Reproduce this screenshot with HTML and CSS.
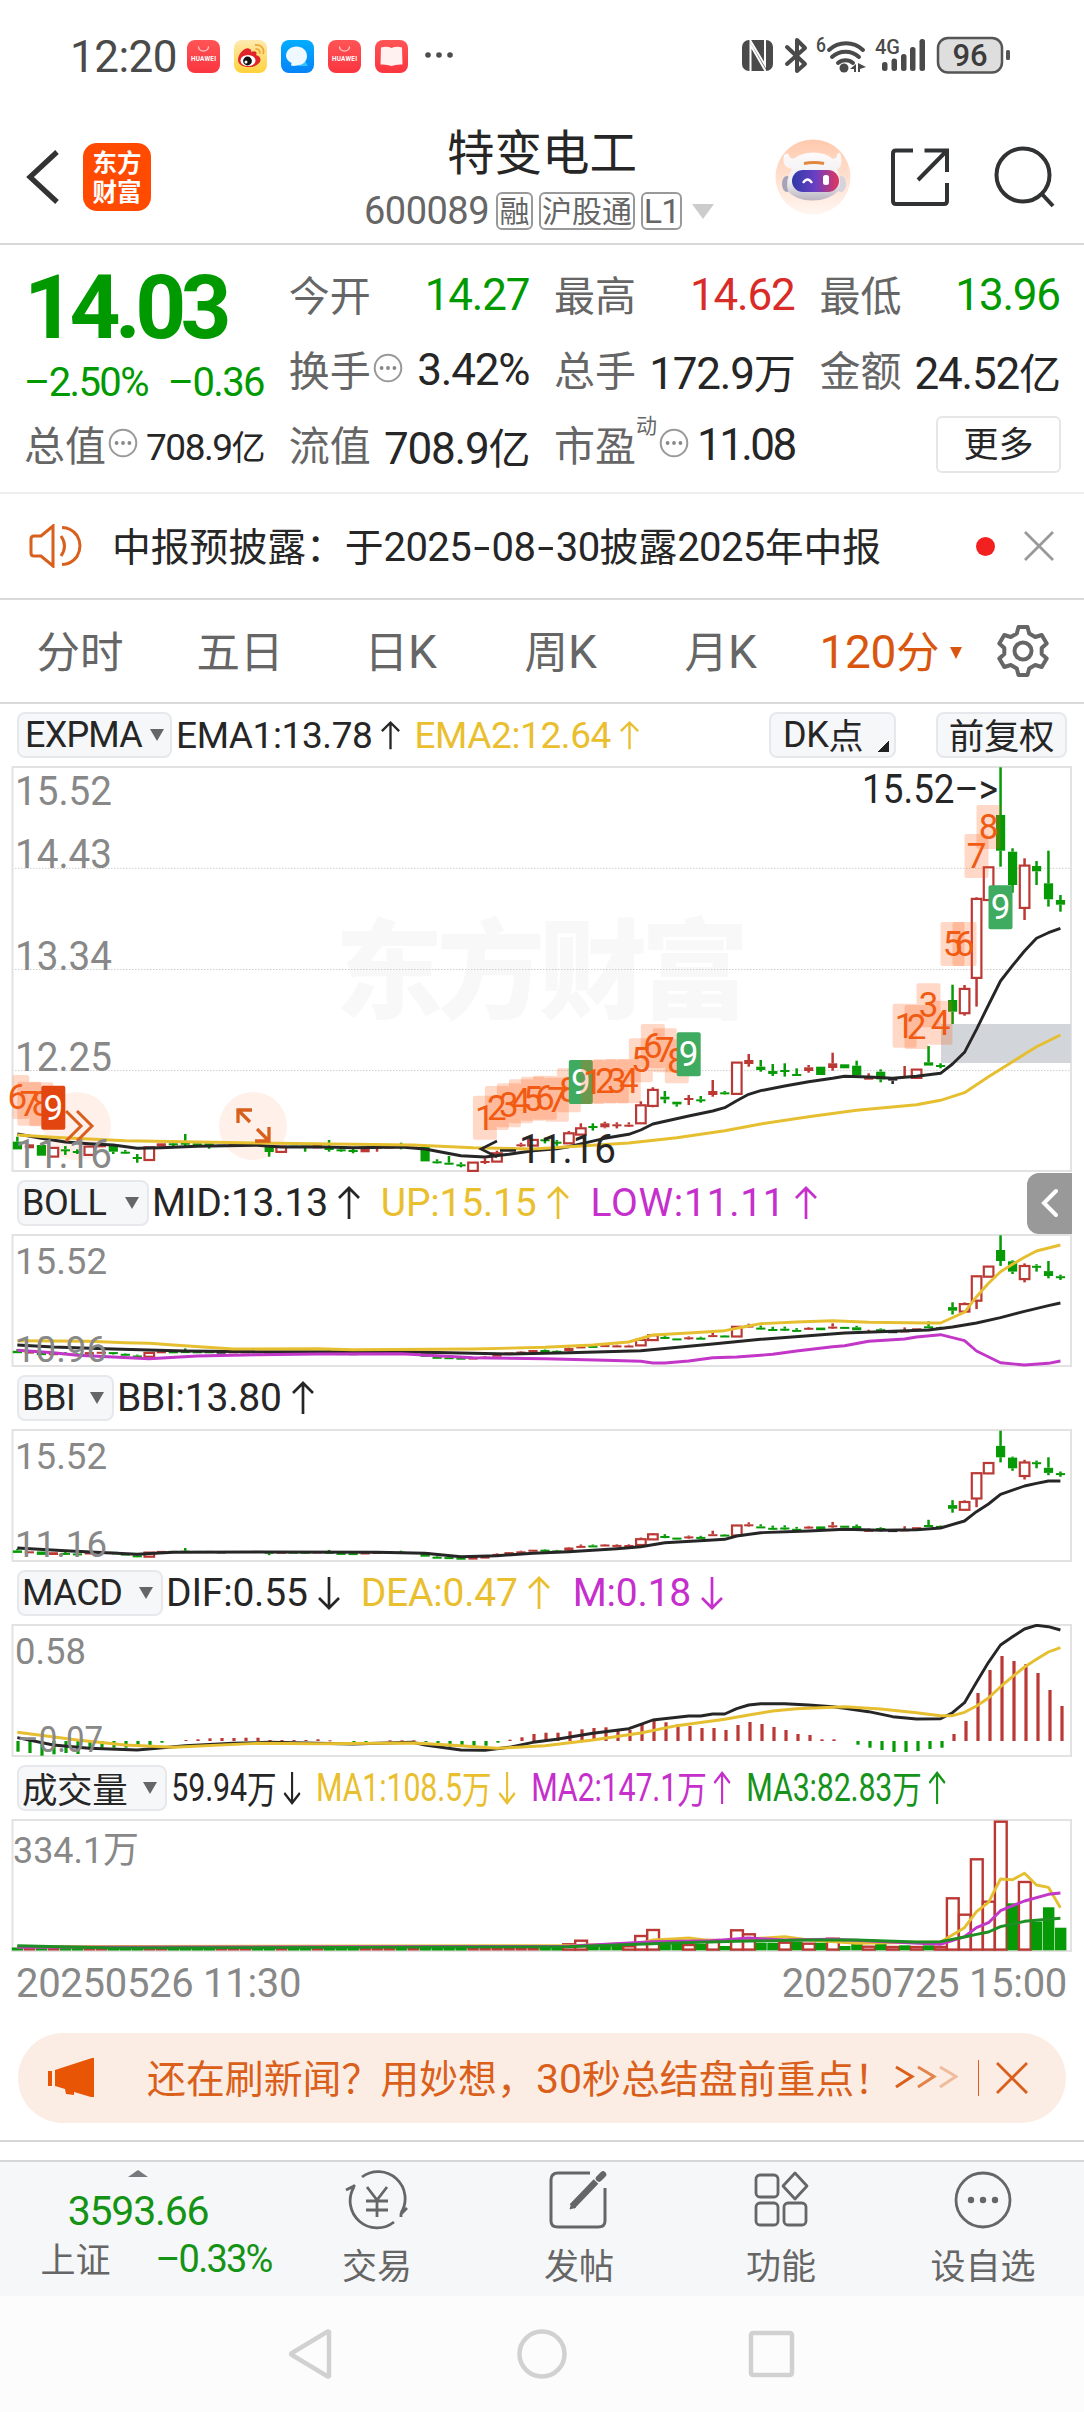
FILE: index.html
```html
<!DOCTYPE html>
<html lang="zh-CN">
<head>
<meta charset="utf-8">
<title>特变电工 600089</title>
<link rel="stylesheet" href="styles.css">
</head>
<body>
<svg class="defs" width="0" height="0" aria-hidden="true">
  <symbol id="up" viewBox="0 0 22 34"><path d="M11 33V2M1 12 11 2l10 10" fill="none" stroke="currentColor" stroke-width="2.7"/></symbol>
  <symbol id="down" viewBox="0 0 22 34"><path d="M11 1v31M1 22l10 10 10-10" fill="none" stroke="currentColor" stroke-width="2.7"/></symbol>
  <symbol id="info" viewBox="0 0 30 30"><circle cx="15" cy="15" r="13.3" fill="none" stroke="#999" stroke-width="2"/><g fill="#888"><circle cx="8.6" cy="15" r="1.9"/><circle cx="15" cy="15" r="1.9"/><circle cx="21.4" cy="15" r="1.9"/></g></symbol>
  <linearGradient id="red" x2="0" y2="1"><stop offset="0" stop-color="#ff5456"/><stop offset="1" stop-color="#fa3540"/></linearGradient>
</svg>

<div class="status">
  <span class="clock">12:20</span>
  <div class="apps">
    <svg width="33" height="33" viewBox="0 0 33 33"><rect width="33" height="33" rx="8" fill="url(#red)"/><path d="M11.500 6.500c0 6 10 6 10 0" fill="none" stroke="#ffd9d9" stroke-width="1.200"/><text x="4" y="21" font-size="6.400" font-weight="700" fill="#fff" textLength="25">HUAWEI</text></svg>
    <svg width="33" height="33" viewBox="0 0 33 33"><defs><linearGradient id="sun" x2="0" y2="1"><stop offset="0" stop-color="#fdeab0"/><stop offset="1" stop-color="#ffd23a"/></linearGradient></defs><rect width="33" height="33" rx="8" fill="url(#sun)"/><path d="M4 20C4 13 12 6 16 9c2 1 1 3 1 3 4-2 7 0 5 3 5 1 6 6 2 9-5 5-20 4-20-4z" fill="#e0242b"/><ellipse cx="14" cy="20.500" rx="7.500" ry="5.500" fill="#fff"/><circle cx="13.500" cy="21" r="4.400" fill="#111"/><circle cx="12" cy="22" r="1.500" fill="#fff"/><path d="M21 5c6-1 10 4 8 9M21.500 9c3-.5 5 2 4 4.500" fill="none" stroke="#f0a638" stroke-width="1.800"/></svg>
    <svg width="33" height="33" viewBox="0 0 33 33"><defs><linearGradient id="sky" x2="0" y2="1"><stop offset="0" stop-color="#00adff"/><stop offset="1" stop-color="#0783f8"/></linearGradient></defs><rect width="33" height="33" rx="8" fill="url(#sky)"/><path d="M22 18l5 8h-9z" fill="#2fc4ff"/><path d="M15.500 6.500c6 0 10.500 4 10.500 9.500 0 6-5 9.500-10 9.500-2 0-3 1-6 0l.5-2.500C7 21 5 18.500 5 16c0-5.500 4.500-9.500 10.500-9.500z" fill="#edf8ff"/></svg>
    <svg width="33" height="33" viewBox="0 0 33 33"><rect width="33" height="33" rx="8" fill="url(#red)"/><path d="M11.500 6.500c0 6 10 6 10 0" fill="none" stroke="#ffd9d9" stroke-width="1.200"/><text x="4" y="21" font-size="6.400" font-weight="700" fill="#fff" textLength="25">HUAWEI</text></svg>
    <svg width="33" height="33" viewBox="0 0 33 33"><rect width="33" height="33" rx="8" fill="url(#red)"/><path d="M6 7.500q6-1.500 10.500.5Q21 6 27 7.500l.5 17q-6-.5-11 1.500-5-2-11-1.500z" fill="#fff1ef"/></svg>
  </div>
  <svg class="more-dots" width="30" height="8" viewBox="0 0 30 8"><g fill="#4d4d4d"><circle cx="4" cy="4" r="2.800"/><circle cx="15" cy="4" r="2.800"/><circle cx="26" cy="4" r="2.800"/></g></svg>
  <svg class="sys" width="272" height="40" viewBox="0 0 272 40">
    <rect x="1" y="4" width="31" height="31" rx="7" fill="#4a4a4a"/><path d="M9.500 35V9l15 26M9 4l15 25V4" fill="none" stroke="#fff" stroke-width="2"/>
    <g fill="none" stroke="#4a4a4a" stroke-linecap="round" stroke-linejoin="round">
      <path d="M46 11l18 17-8 7V4l8 8-18 16" stroke-width="4"/>
      <path d="M88 14a25 25 0 0 1 34 0M91 21a20 20 0 0 1 27 0M97 27a11.500 11.500 0 0 1 15 0" stroke-width="4"/>
    </g>
    <g fill="#4a4a4a"><circle cx="103" cy="32" r="4.500"/><path d="M109 33l6-5v8h-2v-3zM117 27v9h2v-3l6-2z"/>
      <rect x="141" y="26" width="5.500" height="9" rx="2.500"/><rect x="150.500" y="22.500" width="5.500" height="12.500" rx="2.500"/><rect x="160" y="18" width="5.500" height="17" rx="2.500"/><rect x="169" y="11" width="5.500" height="24" rx="2.500"/><rect x="178.500" y="3" width="5.500" height="32" rx="2.500"/>
      <text x="75" y="16" font-size="20" font-weight="500" textLength="10" lengthAdjust="spacingAndGlyphs">6</text><text x="134" y="18" font-size="21" font-weight="500" textLength="25" lengthAdjust="spacingAndGlyphs">4G</text></g>
    <rect x="197" y="2" width="64" height="34.500" rx="10" fill="#dedede" stroke="#555" stroke-width="2.500"/><rect x="265" y="14" width="4" height="10" rx="1.500" fill="#555"/>
    <text x="229" y="30" font-size="31" font-weight="500" text-anchor="middle" fill="#3c3c3c">96</text>
  </svg>
</div>

<header class="top">
  <svg class="back" width="34" height="58" viewBox="0 0 34 58"><path d="M31 4 4 29l27 25" fill="none" stroke="#333" stroke-width="5.200"/></svg>
  <div class="logo"><span>东方</span><span>财富</span></div>
  <div class="title">
    <h1>特变电工</h1>
    <p><span class="code">600089</span><b>融</b><b class="wide">沪股通</b><b class="lv">L1</b><i></i></p>
  </div>
  <svg class="bot" width="76" height="76" viewBox="0 0 76 76">
    <defs><linearGradient id="halo" x2="0" y2="1"><stop offset="0" stop-color="#ffc9ac"/><stop offset="1" stop-color="#fff6f1"/></linearGradient><linearGradient id="visor"><stop offset="0" stop-color="#2f3aa8"/><stop offset=".5" stop-color="#6b3fc4"/><stop offset="1" stop-color="#e2355c"/></linearGradient><linearGradient id="shell" x2="0" y2="1"><stop offset="0" stop-color="#fcfafa"/><stop offset=".6" stop-color="#f0eef1"/><stop offset="1" stop-color="#b9b4c0"/></linearGradient></defs>
    <circle cx="38" cy="38" r="37.500" fill="url(#halo)"/>
    <ellipse cx="12" cy="45" rx="5" ry="8" fill="#a5a3b8"/><ellipse cx="66" cy="45" rx="5" ry="8" fill="#d5d3de"/>
    <path d="M17 30Q6 28 9 16q3-3 5 0 1 5 6 3 6-5 18-5.500 13 0 19 6 5 1 5-4 3-4 4 1 2 11-4 14 5 11 2 21-10 10-27 10-16 0-24-9-3-12 4-22.500z" fill="url(#shell)"/>
    <path d="M29 24.500q10-2 20 0" stroke="#e0893c" stroke-width="3" fill="none"/>
    <rect x="17" y="31" width="47" height="22" rx="11" fill="url(#visor)"/><path d="M28 44q4.500-7 9 0" stroke="#fff" stroke-width="2.300" fill="none"/><rect x="48" y="36" width="6" height="10" rx="2.500" fill="#fff"/>
  </svg>
  <svg class="share" width="60" height="60" viewBox="0 0 60 60" fill="none" stroke="#303234" stroke-width="4"><path d="M23 3.500H6q-3 0-3 3V54q0 3 3 3h48q3 0 3-3V36M34.500 3.500H57V25M57 3.500 28 33"/></svg>
  <svg class="find" width="62" height="62" viewBox="0 0 62 62" fill="none" stroke="#303234" stroke-width="4"><circle cx="29" cy="29" r="26.500"/><path d="M47 47 59 60"/></svg>
</header>

<section class="quote">
  <div class="last"><strong>14.03</strong></div>
  <div class="cell a"><label>今开</label><em class="g">14.27</em></div>
  <div class="cell"><label>最高</label><em class="r">14.62</em></div>
  <div class="cell"><label>最低</label><em class="g">13.96</em></div>
  <div class="chg g"><em>–2.50%</em><em>–0.36</em></div>
  <div class="cell a"><label>换手</label><svg class="info"><use href="#info"/></svg><em>3.42%</em></div>
  <div class="cell"><label>总手</label><em>172.9<u>万</u></em></div>
  <div class="cell"><label>金额</label><em>24.52<u>亿</u></em></div>
  <div class="cell cap"><label>总值</label><svg class="info"><use href="#info"/></svg><em>708.9<u>亿</u></em></div>
  <div class="cell a"><label>流值</label><em>708.9<u>亿</u></em></div>
  <div class="cell pe"><label>市盈</label><sup>动</sup><svg class="info"><use href="#info"/></svg><em>11.08</em></div>
  <div class="cell"><button class="more">更多</button></div>
</section>

<section class="notice">
  <svg width="54" height="44" viewBox="0 0 54 44" fill="none" stroke="#d9601c" stroke-width="3"><path d="M2 15q0-3 3-3h7L24 2v40L12 32H5q-3 0-3-3zM32 12q7 10 0 20M33 3.500q9 0 15 8 6 10 0 21-6 8-15 8"/></svg>
  <p>中报预披露：于<span>2025<i>-</i>08<i>-</i>30</span>披露<span>2025</span>年中报</p>
  <b></b>
  <svg width="30" height="30" viewBox="0 0 30 30" stroke="#999" stroke-width="2.800"><path d="M1 1l28 28M29 1 1 29"/></svg>
</section>

<nav class="tabs">
  <a>分时</a><a>五日</a><a>日<span>K</span></a><a>周<span>K</span></a><a>月<span>K</span></a><a class="on"><span>120</span>分<i></i></a>
  <svg width="54" height="54" viewBox="0 0 54 54" fill="none" stroke="#666" stroke-width="4" stroke-linejoin="round"><path d="M22.500 3h9l1.700 6.500 6 3.500 6.500-2 5 8.500-5 4.500v6l5 4.500-5 8.500-6.500-2-6 3.500-1.700 6.500h-9l-1.700-6.500-6-3.500-6.500 2-5-8.500 5-4.500v-6l-5-4.500 5-8.500 6.500 2 6-3.500z"/><circle cx="27" cy="27" r="8.500"/></svg>
</nav>

<div class="head main">
  <span class="chip c1">EXPMA<i></i></span>
  <span class="val k">EMA1:13.78<svg><use href="#up"/></svg></span>
  <span class="val y">EMA2:12.64<svg><use href="#up"/></svg></span>
  <span class="chip dk">DK<u>点</u></span><span class="chip fq">前复权</span>
</div>
<svg class="chart" id="kline" width="1084" height="406"></svg>

<div class="head">
  <span class="chip c2">BOLL<i></i></span>
  <span class="val k">MID:13.13<svg><use href="#up"/></svg></span>
  <span class="val y">UP:15.15<svg><use href="#up"/></svg></span>
  <span class="val m low">LOW:11.11<svg><use href="#up"/></svg></span>
  <span class="drawer"><svg width="18" height="30" viewBox="0 0 18 30"><path d="M15 3 3 15l12 12" fill="none" stroke="#fff" stroke-width="4" stroke-linecap="round"/></svg></span>
</div>
<svg class="chart" id="boll" width="1084" height="133"></svg>

<div class="head">
  <span class="chip c3">BBI<i></i></span>
  <span class="val k">BBI:13.80<svg><use href="#up"/></svg></span>
</div>
<svg class="chart" id="bbi" width="1084" height="133"></svg>

<div class="head">
  <span class="chip c4">MACD<i></i></span>
  <span class="val k">DIF:0.55<svg><use href="#down"/></svg></span>
  <span class="val y">DEA:0.47<svg><use href="#up"/></svg></span>
  <span class="val m hist">M:0.18<svg><use href="#down"/></svg></span>
</div>
<svg class="chart" id="macd" width="1084" height="133"></svg>

<div class="head">
  <span class="chip c5">成交量<i></i></span>
  <div class="squeeze">
    <span class="val k">59.94<u>万</u><svg><use href="#down"/></svg></span>
    <span class="val y">MA1:108.5<u>万</u><svg><use href="#down"/></svg></span>
    <span class="val m">MA2:147.1<u>万</u><svg><use href="#up"/></svg></span>
    <span class="val gr">MA3:82.83<u>万</u><svg><use href="#up"/></svg></span>
  </div>
</div>
<svg class="chart" id="vol" width="1084" height="133"></svg>
<div class="dates"><span>20250526 11:30</span><span>20250725 15:00</span></div>

<aside class="promo">
  <svg class="horn" width="46" height="40" viewBox="0 0 46 40" fill="#e85504"><path d="M0 13h4v15H0zM7 12 44 0h2v39h-3l-17-5v3l-8-1-1-5-10-3z"/></svg>
  <p>还在刷新闻？用妙想，<span>30</span>秒总结盘前重点！</p>
  <svg class="go" width="64" height="26" viewBox="0 0 64 26" fill="none" stroke="#d95f1a" stroke-width="3"><path d="M2 2l16 9.500L2 22"/><path d="M24 2l16 9.500L24 22" opacity=".75"/><path d="M46 2l16 9.500L46 22" opacity=".35"/></svg>
  <i></i>
  <svg width="34" height="34" viewBox="0 0 34 34" stroke="#d95f1a" stroke-width="2.800"><path d="M2 2l30 30M32 2 2 32"/></svg>
</aside>

<footer class="bar">
  <div class="index"><i></i><strong>3593.66</strong><p><label>上证</label><em>–0.33%</em></p></div>
  <a><svg width="66" height="60" viewBox="0 0 66 60" fill="none" stroke="#666" stroke-width="2.800"><path d="M18 7A27 27 0 0 1 57 43M50 52A27 27 0 0 1 10 17M2 20l8-4 1-1M63 38l-6 6v3M23 17l10 13 10-13M22 31h22M22 40h22M33 30v17"/></svg>交易</a>
  <a><svg width="66" height="60" viewBox="0 0 66 60" fill="none" stroke="#666" stroke-width="3"><path d="M44 3H12q-7 0-7 7v41q0 6 7 6h40q7 0 7-6V18"/><path d="M26 36.500 50 11.500" stroke-width="6.500"/><path d="M24 39l2-6 4 4z" fill="#666" stroke-width="1"/><path d="M53 8.500l4-4" stroke-width="6.500" stroke-linecap="round"/></svg>发帖</a>
  <a><svg width="66" height="60" viewBox="0 0 66 60" fill="none" stroke="#666" stroke-width="2.800"><rect x="8" y="5" width="22" height="22" rx="4"/><rect x="8" y="33" width="22" height="22" rx="4"/><rect x="36" y="33" width="22" height="22" rx="4"/><path d="M47 3 59 16 47 29 35 16z" stroke-linejoin="round"/></svg>功能</a>
  <a><svg width="66" height="60" viewBox="0 0 66 60" fill="none" stroke="#666" stroke-width="2.800"><circle cx="33" cy="30" r="27"/><g fill="#666" stroke="none"><circle cx="21" cy="30" r="3.200"/><circle cx="33" cy="30" r="3.200"/><circle cx="45" cy="30" r="3.200"/></g></svg>设自选</a>
</footer>
<div class="system">
  <svg width="1084" height="60" viewBox="0 0 1084 60" fill="none" stroke="#d1d1d1" stroke-width="4.500"><path d="M329 8v44q-1 1-2 0L292 31q-2-1 0-2L327 8q1-1 2 0z"/><circle cx="542" cy="30" r="22.500"/><rect x="751" y="9" width="41" height="42" rx="2"/></svg>
</div>
<script src="charts.js"></script>
</body>
</html>
```
FILE: styles.css
```css
* { box-sizing: border-box; }
body { margin: 0; width: 1084px; height: 2412px; overflow: hidden; background: #fff; color: #262626; font-family: Roboto, "Noto Sans CJK SC", sans-serif; }
h1, p { margin: 0; font-weight: 400; }
em, i, u { font-style: normal; text-decoration: none; }
u, label, sup { font-family: "Noto Sans CJK SC", sans-serif; }
svg { display: block; flex: none; }
.defs { position: absolute; }
.g { color: #009a00; }
.r { color: #d92b28; }

.status { height: 114px; padding: 0 71px 0 70px; display: flex; align-items: center; }
.clock { width: 117px; font-size: 44px; line-height: 60px; color: #4a4a4a; letter-spacing: -.5px; }
.apps { display: flex; gap: 14px; margin-top: -1px; }
.more-dots { margin: -4px 0 0 16px; }
.sys { margin: -2px 0 0 auto; }

.top { height: 131px; display: flex; align-items: center; border-bottom: 2px solid #d8d8d8; }
.back { margin: -3px 0 0 26px; }
.logo { width: 68px; height: 68px; margin: -4px 0 0 23px; border-radius: 14px; background: #ff4a00; color: #fff; display: flex; flex-direction: column; align-items: center; justify-content: center; font: 700 24.500px/29px "Noto Sans CJK SC", sans-serif; padding-bottom: 2px; }
.title { width: 370px; margin-left: 207px; display: flex; flex-direction: column; align-items: center; }
.title h1 { font: 400 47.500px/64px "Noto Sans CJK SC", sans-serif; margin: -5px 2px 0 0; }
.title p { display: flex; align-items: center; gap: 6px; height: 46px; margin: 6px 8px 0 0; color: #666; font-size: 38px; white-space: nowrap; }
.code { letter-spacing: -.5px; margin-right: 1px; }
.title b { height: 38px; width: 37px; border: 2px solid #999; border-radius: 6px; font: 400 30px/31px "Noto Sans CJK SC", sans-serif; display: flex; justify-content: center; }
.title b.wide { width: 96px; }
.title b.lv { width: 41px; font: 400 34px/34px Roboto, sans-serif; letter-spacing: -1px; }
.title i { border: 11px solid transparent; border-top: 15px solid #ccc; border-bottom: 0; margin-left: 4px; }
.bot { margin: -4px 0 0 47px; }
.share { margin: -4px 0 0 39px; }
.find { margin: -4px 0 0 44px; }

.quote { height: 249px; padding: 13px 24px 0 24px; border-bottom: 2px solid #eee; display: grid; grid-template-columns: 240px 240.500px 240.500px 240.500px; grid-template-rows: 75px 75px 75px; column-gap: 24.800px; align-items: center; }
.quote em { font-size: 44px; letter-spacing: -1.200px; margin-top: -1px; }
.quote u { font-size: 42px; }
.last strong { display: block; font-size: 89px; line-height: 90px; font-weight: 700; letter-spacing: -5.600px; color: #009a00; padding-top: 25px; }
.chg { display: flex; justify-content: space-between; padding-top: 24px; }
.quote .chg em { font-size: 40px; letter-spacing: -1.600px; }
.cell { display: flex; align-items: center; height: 60px; white-space: nowrap; }
.cell em { margin-left: auto; }
.cell label { font-size: 41px; color: #666; padding-bottom: 5px; }
.quote .cap em { font-size: 37px; letter-spacing: -1.500px; }
.quote .cap u { font-size: 34px; }
.quote .pe em { letter-spacing: -2.600px; }
.info { width: 30px; height: 30px; margin: -5px 0 0 2px; }
.cell sup { font-size: 21px; line-height: 20px; align-self: flex-start; color: #666; margin: -2px 0 0; }
.more { width: 125px; height: 57px; border: 2px solid #e6e6e6; border-radius: 6px; background: #fff; color: #262626; font: 400 35px/48px "Noto Sans CJK SC", sans-serif; padding: 0 0 4px; margin: -3px -1px 0 auto; }

.notice { height: 106px; padding: 0 30px 0 29px; display: flex; align-items: center; border-bottom: 2px solid #d9d9d9; }
.notice p { font: 400 38.800px/60px "Noto Sans CJK SC", sans-serif; margin: -4px 0 0 29px; white-space: nowrap; }
.notice span { font: 400 40px Roboto, sans-serif; letter-spacing: -.6px; }
.notice i { display: inline-block; margin: 0 5px; transform: scaleX(1.5); }
.notice b { width: 19px; height: 19px; border-radius: 10px; background: #f32020; margin: 0 29px 0 auto; }

.tabs { height: 104px; display: flex; align-items: center; border-bottom: 2px solid #d9d9d9; color: #666; }
.tabs a { width: 160px; text-align: center; font: 400 43.500px/64px "Noto Sans CJK SC", sans-serif; white-space: nowrap; margin: -3px 0 0; }
.tabs span { font: 400 46px Roboto, sans-serif; letter-spacing: -1.500px; }
.tabs .on { color: #d9560f; width: 182px; }
.tabs .on span { letter-spacing: -.4px; }
.tabs .on i { display: inline-block; border: 6px solid transparent; border-top: 12px solid #d9560f; border-bottom: 0; margin: 0 0 9px 11px; }
.tabs svg { margin-left: 14px; }

.head { height: 62px; padding: 0 12px 0 17px; display: flex; align-items: center; white-space: nowrap; }
.chip { flex: none; height: 46px; border: 2px solid #e6e8ec; border-radius: 8px; background: #f6f7f9; font-size: 36px; line-height: 42px; padding: 0 8px 0 3px; display: flex; align-items: center; justify-content: space-between; letter-spacing: -.4px; }
.chip i { border: 7px solid transparent; border-top: 12px solid #666; border-bottom: 0; }
.c1 { width: 155px; padding: 0 6px; letter-spacing: -.8px; }
.c2 { width: 132px; }
.c3 { width: 97px; }
.c4 { width: 146px; }
.c5 { width: 150px; font: 400 35.500px/38px "Noto Sans CJK SC", sans-serif; }
.dk { margin-left: auto; width: 127px; padding-left: 12px; justify-content: flex-start; background: linear-gradient(315deg, #222 50%, transparent 50%) right 5px bottom 4px / 11px 12px no-repeat #f6f7f9; }
.dk u { font-size: 35px; line-height: 38px; padding-bottom: 3px; }
.fq { width: 131px; margin: 0 5px 0 40px; font: 400 35.500px/39px "Noto Sans CJK SC", sans-serif; justify-content: center; padding: 0 0 3px; }
.val { display: flex; align-items: center; font-size: 39px; margin-left: 3px; letter-spacing: -.2px; }
.val svg { width: 22px; height: 34px; margin: 0 18px 0 10px; }
.val.low { letter-spacing: .7px; margin-left: 4px; }
.val.hist { margin-left: 5px; }
.main .val svg { width: 19px; height: 31px; margin: 0 10px 0 9px; }
.main .val { font-size: 37px; letter-spacing: -.4px; margin-left: 4px; }
.k { color: #262626; }
.y { color: #e9bf2f; }
.m { color: #c52fcb; }
.gr { color: #16931a; }
.squeeze { flex: none; display: flex; transform: scaleX(.779); transform-origin: 0 50%; margin-left: 2px; }
.squeeze .val { letter-spacing: -.2px; }
.squeeze .val svg { margin: 0 17px 0 9px; }
.squeeze u { font-size: 38px; line-height: 44px; padding-bottom: 3px; }
.drawer { margin-left: auto; width: 45px; height: 61px; border-radius: 12px 0 0 12px; background: #999; display: flex; align-items: center; padding-left: 14px; }

.chart text { font-family: Roboto, sans-serif; }
.chart .wm { font: 900 108px "Noto Sans CJK SC", sans-serif; fill: #f8f8f8; }
.dates { height: 62px; padding: 0 17px 0 16px; display: flex; justify-content: space-between; align-items: center; font-size: 40px; color: #888; letter-spacing: -.3px; }

.promo { height: 90px; margin: 19px 18px 17px; padding: 0 37px 0 30px; border-radius: 45px; background: #fcede4; display: flex; align-items: center; color: #d95f1a; }
.promo p { font: 400 38.900px/60px "Noto Sans CJK SC", sans-serif; margin: -5px 0 0 53px; white-space: nowrap; width: 748px; }
.promo span { font: 400 41px Roboto, sans-serif; }
.promo i { width: 1px; height: 36px; background: #d95f1a; margin: 0 16px 0 20px; }

.bar { height: 156px; padding-top: 20px; border-top: 2px solid #d4d6d8; background: linear-gradient(#fff 18px, #d4d6d8 18px, #d4d6d8 20px, #f6f7f9 20px); display: flex; color: #666; }
.bar a { width: 202px; display: flex; flex-direction: column; align-items: center; padding-top: 8px; font: 400 35px/56px "Noto Sans CJK SC", sans-serif; }
.bar a svg { margin-bottom: 6px; }
.index { width: 276px; display: flex; flex-direction: column; align-items: center; color: #149314; }
.index i { border: 10px solid transparent; border-bottom: 7px solid #77777d; border-top: 0; margin-top: 8px; }
.index strong { font-weight: 400; font-size: 41px; line-height: 48px; letter-spacing: -1.200px; margin-top: 10px; }
.index p { display: flex; align-items: center; gap: 45px; padding-left: 36px; font-size: 38px; height: 44px; letter-spacing: -1.800px; margin-top: 2px; }
.index label { font-size: 35px; color: #666; letter-spacing: 0; padding-bottom: 4px; }
.system { height: 116px; background: #fcfcfc; padding-top: 28px; }
```
FILE: charts.js
```js
// Chart coordinates are kept in thirds of a pixel; each panel has its own vertical offset.
const RED = '#bb3935', GREEN = '#079a07', BLACK = '#262626', YELLOW = '#e6bf30', MAGENTA = '#c236c8';
const X = i => 17.3 + 11.99 * i;
const n = v => v.toFixed(1);
const rect = (x, y, w, h, a) => `<rect x="${n(x)}" y="${n(y)}" width="${n(w)}" height="${n(h)}" ${a}/>`;
const line = (pts, off, c) => `<polyline fill="none" stroke="${c}" stroke-width="2.900" stroke-linejoin="round" points="${pts.split(' ').map(p => { const [i, y] = p.split(','); return n(X(+i)) + ',' + n(y / 3 - off); }).join(' ')}"/>`;
const label = (x, y, w, s, size, c = '#888') => `<text x="${x}" y="${y}" font-size="${size}" fill="${c}" textLength="${w}" lengthAdjust="spacingAndGlyphs">${s}</text>`;
const frame = h => `<rect x="12.500" y="1" width="1058.500" height="${h - 2}" fill="none" stroke="#e2e2e2" stroke-width="2"/>`;

// kind (g, r, h = hollow red, k), body top, body bottom, wick top, wick bottom
const candles = `g 1145 1168 1130 1168|r 1153 1165|g 1155 1187|h 1162 1188|g 1168 1172 1158 1185|g 1173 1177 1168 1182|h 1158 1183|r 1155 1162|g 1158 1175 1158 1182|g 1175 1178 1170 1180|g 1191 1196 1182 1208|h 1160 1198|r 1150 1160|g 1150 1154 1148 1160|g 1148 1152 1122 1158|g 1150 1158|g 1150 1160 1150 1166|k 1154 1156|r 1151 1154|r 1151 1154|g 1150 1155|g 1155 1176 1155 1190|h 1158 1174|g 1157 1160|g 1157 1160 1157 1175|r 1155 1165|g 1158 1170 1140 1175|g 1168 1172 1163 1175|g 1170 1174 1165 1180|r 1165 1177|r 1160 1164 1160 1175|r 1160 1165|g 1158 1162 1148 1168|r 1160 1165|g 1160 1204|g 1204 1208 1198 1210|g 1208 1212 1188 1213|g 1213 1218 1207 1222|h 1206 1231|r 1203 1207 1195 1212|h 1178 1203 1172 1203|r 1161 1164|r 1153 1157 1148 1160|h 1138 1155|g 1138 1142 1133 1150|g 1145 1149 1140 1157|h 1118 1148 1113 1152|h 1103 1122 1090 1122|g 1098 1102 1090 1112|r 1090 1102 1085 1105|r 1093 1097 1087 1105|r 1094 1098 1087 1100|h 1034 1088 1024 1088|h 988 1036 982 1042|g 1010 1018 993 1030|g 1025 1033 1025 1040|r 1014 1018 1005 1035|g 1018 1022 1008 1028|r 993 1005 960 1010|g 997 1001 993 1003|h 906 1000|r 900 912 882 920|g 920 930 900 935|g 933 942 912 948|g 930 934 910 950|g 942 946 925 946|r 922 933 915 938|g 920 945|r 910 924 878 932|g 913 925|g 917 946 902 946|r 953 958 940 958|g 935 958 928 967|k 955 962 955 972|r 948 952 918 952|h 927 952|g 907 917 858 917|g 915 919 910 925|g 720 755 674 792|h 685 758 675 767|h 415 652 412 740|h 320 418|g 165 272 22 320|g 275 375 265 398|h 315 442 295 480|g 318 334 303 375|g 370 418 272 440|g 420 434 405 455`
  .split('|').map(s => { const [k, ...v] = s.split(' '); return { k, v: v.map(Number) }; });

function drawCandles(map) {
  return candles.map(({ k, v }, i) => {
    const c = k === 'g' ? GREEN : k === 'k' ? BLACK : RED, x = X(i);
    const [t, b, wt = v[0], wb = v[1]] = v;
    const T = map(t), B = map(b), A = map(wt), Z = map(wb);
    let s = '';
    if (T - A > .3) s += rect(x - 1.2, A, 2.5, T - A, `fill="${c}"`);
    if (Z - B > .3) s += rect(x - 1.2, B, 2.5, Z - B, `fill="${c}"`);
    if (k === 'h' && B - T > 3.5) s += rect(x - 4.7, T + .6, 9.6, B - T, `fill="#fff" stroke="${c}" stroke-width="2.200"`);
    else s += rect(x - 4.5, T, 9.2, Math.max(B - T, 2), `fill="${c}"`);
    return s;
  }).join('');
}

// Nine-turn markers: index, top edge, digit
const marks = '0,945,6 1,965,7 2,967,8 3,977,9,#e2450f 39,1007,1 40,978,2 41,970,3 42,958,4 43,950,5 44,947,6 45,953,7 46,925,8 47,900,9,#3fab60 48,900,1 49,898,2 50,898,3 51,898,4 52,835,5 53,792,6 54,805,7 55,838,8 56,817,9,#3fab60 74,731,1 75,735,2 76,670,3 77,722,4 78,486,5 79,486,6 80,222,7 81,135,8 82,376,9,#3fab60'
  .split(' ').map(m => {
    const [i, t, d, fill] = m.split(','), x = Math.max(X(+i) - 12, 12.5), y = t / 3 - 6, w = X(+i) + 12 - x;
    return rect(x, y, w, 44, `rx="2" fill="${fill || '#ff5a14'}" ${fill ? '' : 'fill-opacity=".24"'}`) +
      `<text x="${n(X(+i))}" y="${n(y + 34)}" font-size="35" text-anchor="middle" fill="${fill ? '#fff' : '#f05a12'}">${d}</text>`;
  }).join('');

const grid = [868.3, 969.5, 1070.6].map(y => `<path d="M12 ${n(y - 766)}H1071" stroke="#cfcfcf" stroke-dasharray="1.500 1.500"/>`).join('');

document.getElementById('kline').innerHTML =
  `<text class="wm" x="335" y="244" textLength="414">东方财富</text>` + grid + frame(406) +
  rect(941, 258, 130, 39, 'fill="#d2d5da"') +
  '<circle cx="77" cy="360" r="34" fill="#fff0e9"/><circle cx="253" cy="360" r="34" fill="#fff0e9"/>' +
  drawCandles(y => y / 3 - 6) +
  line('0,1122 2,1135 4,1146 6,1151 8,1155 10,1165 12,1163 15,1159 20,1156 22,1161 25,1160 28,1163 32,1161 34,1167 37,1187 39,1191 41,1183 43,1172 45,1166 46,1160 49,1135 51,1123 52,1110 53,1092 56,1068 58,1053 59,1043 60,1022 61,1003 62,992 64,978 66,965 68,955 69,949 71,951 73,955 75,949 77,940 78,912 79,877 80,808 81,735 82,663 83,617 84,573 85,535 86,518 87,505', 6, BLACK) +
  line('0,1125 3,1132 6,1137 9,1142 14,1145 20,1149 28,1153 33,1155 38,1163 43,1167 46,1160 51,1149 55,1133 59,1112 62,1092 66,1070 70,1051 75,1034 77,1021 79,998 81,950 83,905 85,860 87,825', 6, YELLOW) +
  marks +
  '<g fill="none" stroke="#d9601c" stroke-width="3"><path d="M66 345l15 15-15 15M77 345l15 15-15 15"/><path d="M250 356l-12-12M238 357v-13h14M257 363l12 12M269 361v14h-14" stroke-width="3.300"/></g>' +
  label(15, 39, 97, '15.52', 41) + label(15, 102, 97, '14.43', 41) + label(15, 204, 97, '13.34', 41) + label(15, 305, 97, '12.25', 41) + label(15, 402, 97, '11.16', 41) +
  label(862, 37, 136, '15.52–&gt;', 41, BLACK) +
  label(519, 397, 97, '11.16', 41, BLACK) +
  '<path d="M497 375l-16 8 16 8M500 384.500h16" fill="none" stroke="#262626" stroke-width="2.600"/>';

document.getElementById('boll').innerHTML = frame(133) + drawCandles(y => (196 + (y - 22) / 1213 * 374) / 3 - 64) +
  line('0,525 3,531 8,537 14,543 20,545 32,545 38,550 41,552 46,548 52,542 58,522 62,508 66,497 69,489 73,484 76,480 78,471 80,459 82,443 84,424 86,407 87,399', 64, BLACK) +
  line('0,512 6,514 9,518 11,520 13,525 18,537 25,536 28,539 38,537 44,532 48,525 51,516 53,495 56,489 59,482 61,468 62,461 65,456 68,452 71,457 76,459 77,459 79,427 80,380 81,340 82,305 83,283 84,262 85,243 86,234 87,225', 64, YELLOW) +
  line('0,541 3,548 5,556 8,561 11,566 15,558 20,554 25,552 32,551 35,557 38,563 44,566 49,571 52,574 53,579 54,579 56,573 58,563 60,561 63,553 65,543 68,530 69,527 71,514 74,507 75,501 77,494 79,512 80,543 82,578 84,585 86,580 87,573', 64, MAGENTA) +
  label(15, 40, 92, '15.52', 37) + label(15, 128, 92, '10.96', 37);

document.getElementById('bbi').innerHTML = frame(133) + drawCandles(y => (782 + (y - 22) / 1213 * 388) / 3 - 259) +
  line('0,1134 4,1142 10,1153 13,1147 20,1146 30,1147 34,1150 37,1160 40,1157 43,1150 46,1145 50,1136 52,1130 54,1118 58,1110 59,1108 60,1098 62,1088 66,1083 69,1078 72,1081 75,1079 77,1074 79,1053 80,1025 81,1002 82,973 84,948 85,940 86,933 87,933', 259, BLACK) +
  label(15, 40, 92, '15.52', 37) + label(15, 128, 92, '11.16', 37);

const ends = [545,549,557,553,549,552,538,533,533,533,530,526,518,513,510,508,505,504,504,503,503,510,510,510,510,508,511,513,516,516,513,511,511,511,516,523,530,531,530,527,518,509,502,492,488,488,484,478,474,472,478,480,463,452,457,462,468,474,474,480,465,456,462,471,480,492,495,508,508,513,524,533,540,546,546,543,537,533,492,453,369,300,258,273,282,309,360,408];
document.getElementById('macd').innerHTML = frame(133) +
  ends.map((e, i) => e === 513 ? '' : rect(18 + 12 * i - 1.6, Math.min(e, 513) / 3 - 54, 3.2, Math.max(Math.abs(e - 513) / 3, 1), `fill="${e > 513 ? GREEN : RED}"`)).join('') +
  line('0,503 3,525 6,535 10,540 14,527 18,520 21,517 28,522 33,517 34,525 37,540 39,541 41,532 43,517 45,508 48,490 50,481 51,476 52,463 53,450 56,438 57,438 58,432 59,432 60,416 61,405 62,401 64,401 66,405 68,410 69,415 71,425 73,440 75,447 77,446 78,428 79,398 80,337 81,277 82,225 83,200 84,177 85,166 86,170 87,180', 54, BLACK) +
  line('0,487 5,510 9,525 13,532 20,520 25,521 33,519 36,525 40,535 44,527 48,510 52,489 55,467 59,448 61,435 63,423 65,416 69,410 72,417 75,428 77,437 78,437 79,427 80,408 81,384 82,350 83,320 84,291 85,268 86,246 87,233', 54, YELLOW) +
  label(15, 40, 71, '0.58', 37) + label(17, 128, 86, '–0.07', 37);

const late = '46r1120 47r1109 48g1126 49g1128 50g1128 51r1126 52r1095 53r1077 54g1118 55g1118 56r1122 57g1122 58r1107 59g1128 60r1078 61r1090 62g1118 63g1118 64r1115 65g1115 66r1118 67g1118 68r1103 69g1128 70g1122 71r1127 72g1122 73r1128 74g1126 75r1128 76g1126 77r1128 78r982 79r1031 80r865 81r992 82r752 83g1000 84r933 85g1055 86g1012 87g1073'.split(' ');
document.getElementById('vol').innerHTML = frame(133) +
  candles.slice(0, 46).map(({ k }, i) => rect(X(i) - 5.5, 128.5, 11.4, 3, `fill="${k === 'g' ? GREEN : RED}"`)).join('') +
  late.map(s => {
    const [, i, k, t] = s.match(/^(\d\d)(.)(\d+)$/), y = t / 3 - 249;
    return k === 'g' ? rect(X(+i) - 5.4, y, 11.4, 131.3 - y, `fill="${GREEN}"`) : rect(X(+i) - 5.6, y + 1, 11.8, 129.6 - y, `fill="#fff" stroke="${RED}" stroke-width="2.4"`);
  }).join('') +
  line('0,1130 46,1127 52,1120 53,1110 55,1106 56,1104 58,1113 61,1107 64,1100 66,1110 70,1120 77,1116 79,1073 80,1025 81,997 82,927 83,929 84,910 85,945 86,952 87,1013', 249, YELLOW) +
  line('0,1132 46,1129 53,1115 58,1112 61,1104 64,1110 68,1108 77,1123 79,1100 80,1073 81,1058 82,1022 84,993 86,973 87,969', 249, MAGENTA) +
  line('0,1127 8,1134 46,1130 54,1120 60,1114 66,1110 70,1110 75,1116 77,1115 79,1101 80,1093 81,1086 82,1070 83,1062 84,1054 86,1048 87,1045', 249, '#1e8f22') +
  label(13, 44, 126, '334.1<tspan font-family="Noto Sans CJK SC">万</tspan>', 37);
```
